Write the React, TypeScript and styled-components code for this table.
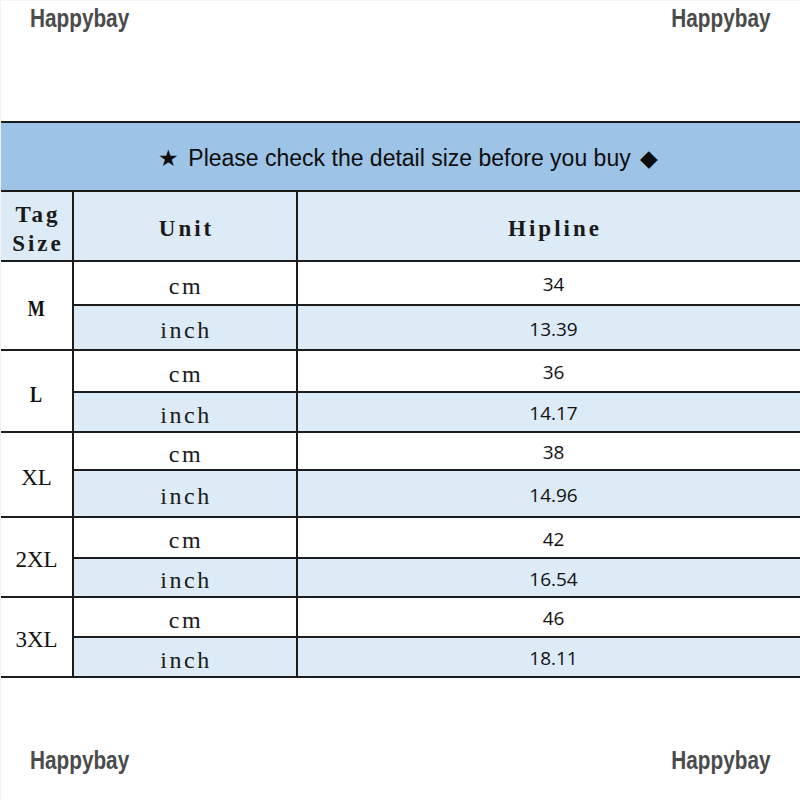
import React from 'react';
import styled, { createGlobalStyle } from 'styled-components';

/** ____________________________________________________    GLOBAL
 * */
const GlobalStyle = createGlobalStyle`
    html, body {
        margin: 0;
        padding: 0;
        background: #fff;
    }
`;

type SizeRow = {
    tag: string
    bold?: boolean
    cm: string
    inch: string
    heights: [number, number]
}

const rows: SizeRow[] = [
    {tag: 'M', bold: true, cm: '34', inch: '13.39', heights: [42, 43]},
    {tag: 'L', bold: true, cm: '36', inch: '14.17', heights: [40, 38]},
    {tag: 'XL', cm: '38', inch: '14.96', heights: [36, 45]},
    {tag: '2XL', cm: '42', inch: '16.54', heights: [39, 37]},
    {tag: '3XL', cm: '46', inch: '18.11', heights: [38, 38]},
];

/** ____________________________________________________    PAGE
 * */
const Page = styled('div')({
    width: '800px',
    height: '800px',
    display: 'flex',
    flexDirection: 'column',
    overflow: 'hidden',
    boxSizing: 'border-box',
    borderLeft: '1px solid #f1f1f1',
    borderTop: '1px solid #f4f4f4',
});

const MarkBar = styled.div<{ $bottom?: boolean }>`
    display: flex;
    justify-content: space-between;
    align-items: ${p => (p.$bottom ? 'flex-end' : 'flex-start')};
    padding: ${p => (p.$bottom ? '0 30px 26px 29px' : '4px 30px 0 29px')};
    height: ${p => (p.$bottom ? 'auto' : '116px')};
    flex: ${p => (p.$bottom ? '1' : 'none')};
`;

const Watermark = styled.span<{ $right?: boolean }>`
    display: inline-block;
    font-family: "Liberation Sans", Arial, sans-serif;
    font-weight: 700;
    font-size: 25px;
    color: #4b4b4b;
    line-height: 1.1;
    transform: scaleX(0.83);
    transform-origin: ${p => (p.$right ? 'right' : 'left')} center;
`;

/** ____________________________________________________    TABLE
 * */
const Table = styled.div<{ $rows: string }>`
    flex: none;
    width: 808px;
    display: grid;
    grid-template-columns: 71px 222px 1fr;
    grid-template-rows: ${p => p.$rows};
    gap: 2px;
    background: #1c1c1c;
    border-top: 2px solid #1c1c1c;
    border-bottom: 2px solid #1c1c1c;
`;

const Banner = styled.div`
    grid-column: 1 / 4;
    background: #9dc3e6;
    display: flex;
    align-items: center;
    justify-content: center;
    padding: 4px 0 0 6px;
    font-family: "Liberation Sans", Arial, sans-serif;
    font-size: 23px;
    color: #0d0d0d;
    gap: 9px;
`;

const Cell = styled.div<{ $tint?: boolean; $span?: number }>`
    background: ${p => (p.$tint ? '#ddebf7' : '#fff')};
    grid-row: ${p => (p.$span ? `span ${p.$span}` : 'auto')};
    display: flex;
    align-items: center;
    justify-content: center;
    text-align: center;
    color: #111;
`;

const HeadText = styled.span`
    font-family: "Liberation Serif", "Times New Roman", serif;
    font-weight: 700;
    font-size: 23px;
    letter-spacing: 3px;
    line-height: 29px;
    padding: 5px 0 0 3px;
    color: #1a1a1a;
`;

const TagText = styled.span<{ $bold?: boolean }>`
    display: inline-block;
    font-family: "Liberation Serif", "Times New Roman", serif;
    font-weight: ${p => (p.$bold ? 700 : 400)};
    font-size: ${p => (p.$bold ? '24px' : '23px')};
    transform: ${p => (p.$bold ? 'scaleX(0.75)' : 'none')};
    padding-top: 6px;
`;

const UnitText = styled.span`
    font-family: "Liberation Serif", "Times New Roman", serif;
    font-size: 24px;
    letter-spacing: 2.5px;
    padding: 6px 0 0 2px;
    color: #1a1a1a;
`;

const Value = styled.span`
    font-family: "Open Sans", "Noto Sans", sans-serif;
    font-size: 19px;
    padding-top: 2px;
`;

export default function App() {
    const template = ['67px', '68px', ...rows.flatMap(r => r.heights.map(h => `${h}px`))].join(' ');

    return (
        <>
            <GlobalStyle/>
            <Page>
                <MarkBar>
                    <Watermark>Happybay</Watermark>
                    <Watermark $right>Happybay</Watermark>
                </MarkBar>

                <Table $rows={template}>
                    <Banner>
                        <span>★</span>
                        <span>Please check the detail size before you buy</span>
                        <span>◆</span>
                    </Banner>

                    <Cell $tint><HeadText>Tag<br/>Size</HeadText></Cell>
                    <Cell $tint><HeadText>Unit</HeadText></Cell>
                    <Cell $tint><HeadText>Hipline</HeadText></Cell>

                    {rows.map(r => (
                        <React.Fragment key={r.tag}>
                            <Cell $span={2}><TagText $bold={r.bold}>{r.tag}</TagText></Cell>
                            <Cell><UnitText>cm</UnitText></Cell>
                            <Cell><Value>{r.cm}</Value></Cell>
                            <Cell $tint><UnitText>inch</UnitText></Cell>
                            <Cell $tint><Value>{r.inch}</Value></Cell>
                        </React.Fragment>
                    ))}
                </Table>

                <MarkBar $bottom>
                    <Watermark>Happybay</Watermark>
                    <Watermark $right>Happybay</Watermark>
                </MarkBar>
            </Page>
        </>
    );
}
